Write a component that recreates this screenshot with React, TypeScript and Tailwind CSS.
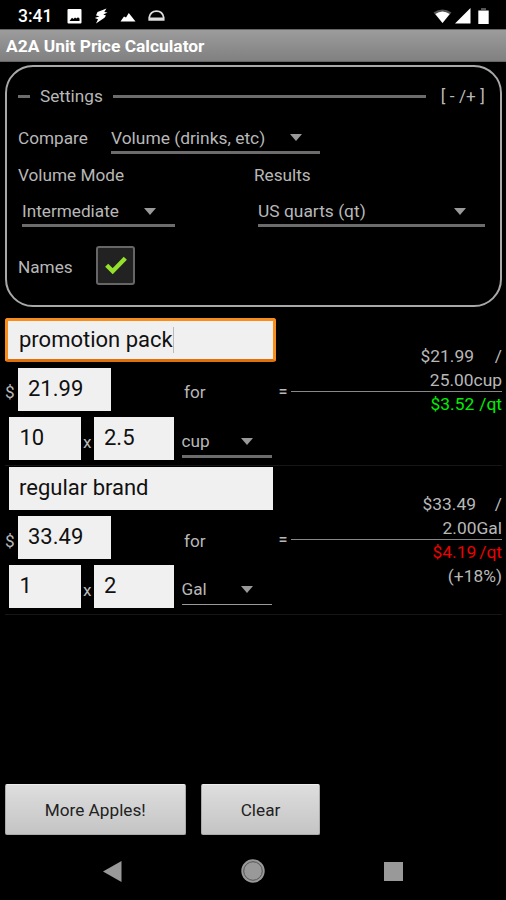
import { useState } from 'react';
import clsx from 'clsx';

type Item = {
    name: string;
    price: string;
    count: string;
    size: string;
    unit: string;
    total: string;
    result: string;
    per: string;
    diff?: string;
    best: boolean;
};

const initialItems: Item[] = [
    { name: 'promotion pack', price: '21.99', count: '10', size: '2.5', unit: 'cup', total: '25.00cup', result: '$3.52', per: '/qt', best: true },
    { name: 'regular brand', price: '33.49', count: '1', size: '2', unit: 'Gal', total: '2.00Gal', result: '$4.19', per: '/qt', diff: '(+18%)', best: false },
];

function StatusBar() {
    return (
        <div className="flex h-[29px] items-center justify-between pt-[3px] pr-[17px] pl-[18px] text-white">
            <div className="flex items-center">
                <span className="w-[49px] text-[17.5px] font-medium">3:41</span>
                <svg width="15" height="15" viewBox="0 0 15 15" fill="#fff">
                    <path fillRule="evenodd" d="M1.500 0h12a1 1 0 0 1 1 1v12.500a1 1 0 0 1-1 1H1.500a1 1 0 0 1-1-1V1a1 1 0 0 1 1-1zM2.500 12h10V9.500l-1.500-1.200L9.500 9.500 8 8.500 6.500 10 5 8.800z" />
                </svg>
                <svg className="ml-[12px]" width="14" height="16" viewBox="0 0 14 16" fill="#fff">
                    <path d="M12.500 0.500L3.500 4 2 7.500 5.500 8.300 0.800 10 4 11.200 2 15.500 10.500 9.800 12 7.500 9.300 6.500 13.500 4.500 10.300 4z" />
                </svg>
                <svg className="mt-0.5 ml-[12px]" width="16" height="10" viewBox="0 0 16 10" fill="#fff">
                    <path d="M0.500 9.500L4 4.500l2 1L8.800 1 15.500 9.500z" />
                </svg>
                <svg className="ml-[12px]" width="17" height="12" viewBox="0 0 17 12" fill="none" stroke="#ddd" strokeWidth="1.700">
                    <path d="M1.200 10V7.500C2 3.500 5 1.200 8.500 1.200s6.500 2.300 7.200 6.300V10zM1.500 8.300h14" />
                </svg>
            </div>
            <div className="flex items-center">
                <svg width="19" height="15" viewBox="0 0 19 15">
                    <path d="M0.500 3.500Q9.500-2.500 18.500 3.500L9.500 14z" fill="#555" />
                    <path d="M2.300 5Q9.500 0 16.700 5L9.500 14z" fill="#fff" />
                </svg>
                <svg className="ml-[3px]" width="16" height="16" viewBox="0 0 16 16" fill="#fff">
                    <path d="M15.500 0v15.500H0z" />
                </svg>
                <svg className="ml-[7px]" width="11" height="16" viewBox="0 0 11 16">
                    <path d="M3 0h5v2H3z" fill="#555" />
                    <path d="M0.300 2.500h10.400V16H0.300z" fill="#fff" />
                </svg>
            </div>
        </div>
    );
}

function Spinner({ label, className, thin }: { label: string; className?: string; thin?: boolean }) {
    return (
        <div className={clsx('flex items-center justify-between', thin ? 'border-b border-[#999]' : 'border-b-[3px] border-[#6c6c6c]', className)}>
            <span>{label}</span>
            <svg width="12" height="7" viewBox="0 0 12 7" fill="#999">
                <path d="M0 0h12L6 7z" />
            </svg>
        </div>
    );
}

function Field({ value, onChange, className }: { value: string; onChange: (v: string) => void; className: string }) {
    return (
        <input
            value={value}
            onChange={e => onChange(e.target.value)}
            className={clsx('h-[43px] bg-[#f0f0f0] text-[22px] text-[#111] outline-none', className)}
        />
    );
}

function Row({ item, focused, update }: { item: Item; focused: boolean; update: (patch: Partial<Item>) => void }) {
    return (
        <div className="mr-1 ml-[5px] flex h-[149px] border-b border-[#161616]">
            <div className="w-[272px] shrink-0">
                {focused ? (
                    <div className="mt-px flex h-11 w-[271px] items-center rounded-[3px] border-[3px] border-b-[#e0700a] border-[#f98d1c] bg-[#f0f0f0] pl-[11px]">
                        <span className="text-[22px] text-[#111]">{item.name}</span>
                        <span className="h-[26px] w-px bg-[#bbb]" />
                    </div>
                ) : (
                    <Field value={item.name} onChange={v => update({ name: v })} className="mt-px ml-[4px] block w-[264px] pb-0.5 pl-[10px]" />
                )}
                <div className="mt-[6px] flex h-[43px] items-center">
                    <span className={clsx('w-[13px]', focused ? 'pt-1' : 'pt-1.5')}>$</span>
                    <Field value={item.price} onChange={v => update({ price: v })} className="w-[93px] pb-[3px] pl-[10px]" />
                    <span className={clsx('ml-[73px]', focused ? 'pt-1' : 'pt-1.5')}>for</span>
                </div>
                <div className="mt-[6px] flex h-[43px] items-center pl-[3.500px]">
                    <Field value={item.count} onChange={v => update({ count: v })} className="w-[72px] pb-[3px] pl-[11px]" />
                    <span className="w-[13.500px] pt-[6px] text-center">x</span>
                    <Field value={item.size} onChange={v => update({ size: v })} className="w-[80px] pb-[3px] pl-[10px]" />
                    <Spinner label={item.unit} thin={!focused} className={clsx('ml-[7.500px] w-[90px] pr-[19px]', focused ? 'mt-[6px] h-[32px] pt-[2px]' : 'mt-[5px] h-[31px] pt-px')} />
                </div>
            </div>
            <div className={clsx('flex flex-1 text-[17.4px]', focused ? 'pt-[27px]' : 'pt-[26px]')}>
                <span className="w-[14px] pt-[38px] pl-[1.500px] text-[16px] font-medium">=</span>
                <div className="flex flex-1 flex-col text-right leading-6">
                    <div className="h-[47px]">
                        <div className="flex justify-end">
                            <span>${item.price}</span>
                            <span className={clsx('text-right', focused ? 'w-[28px]' : 'w-[26px]')}>/</span>
                        </div>
                        <div>{item.total}</div>
                    </div>
                    <div className="h-px bg-[#888]" />
                    <div className={clsx('flex justify-end', item.best ? 'gap-[5px] text-[#00ee00]' : 'gap-[3px] text-[#ee0000]')}>
                        <span>{item.result}</span>
                        <span>{item.per}</span>
                    </div>
                    {item.diff && <div>{item.diff}</div>}
                </div>
            </div>
        </div>
    );
}

export default function App() {
    const [items, setItems] = useState(initialItems);
    const [names, setNames] = useState(true);

    const update = (i: number, patch: Partial<Item>) => {
        setItems(items.map((it, n) => (n === i ? { ...it, ...patch } : it)));
    };

    const button = 'h-[51px] rounded-[2px] border border-[#aaa] border-t-[#eee] bg-linear-to-b from-[#dedede] to-[#c4c4c4] text-[#222]';

    return (
        <div className="flex h-[900px] w-[506px] flex-col overflow-hidden bg-black font-[Roboto,sans-serif] text-[17.2px] leading-5 text-[#b8b8b8]">
            <StatusBar />
            <div className="flex h-[33px] items-center border-y border-[#666] bg-linear-to-b from-[#9c9c9c] to-[#808080] pl-1.5 text-[17.4px] font-bold text-white">
                A2A Unit Price Calculator
            </div>

            <div className="mt-[3px] mr-1 ml-[5px] h-[242px] rounded-[28px] border-2 border-[#a8a8a8] pr-[15px] pl-[11px]">
                <div className="mt-[19px] flex h-5 items-center">
                    <div className="h-[3px] w-3 bg-[#6c6c6c]" />
                    <span className="ml-[10px] w-[73px]">Settings</span>
                    <div className="h-[3px] w-[313px] bg-[#6c6c6c]" />
                    <span className="ml-auto tracking-[0.1px]">[ - /+ ]</span>
                </div>
                <div className="mt-[14px] flex h-[34px] items-start">
                    <span className="w-[93px] pt-[8px]">Compare</span>
                    <Spinner label="Volume (drinks, etc)" className="h-[34px] w-[209px] pt-[4px] pr-[18px] text-[17.4px]" />
                </div>
                <div className="mt-[11px] flex h-5">
                    <span className="w-[236px]">Volume Mode</span>
                    <span>Results</span>
                </div>
                <div className="mt-[10px] flex pl-1">
                    <Spinner label="Intermediate" className="h-[32px] w-[153px] pt-[3px] pr-[19px]" />
                    <Spinner label="US quarts (qt)" className="ml-[83px] h-[32px] w-[227px] pt-[3px] pr-[19px] text-[17.4px]" />
                </div>
                <div className="mt-[19px] flex h-[39px] items-center">
                    <span className="w-[77.500px] pt-0.5">Names</span>
                    <button onClick={() => setNames(!names)} className="flex size-[39px] items-center justify-center rounded-[3px] border-2 border-[#666] bg-[#222]">
                        {names && (
                            <svg className="ml-0.5" width="22" height="19" viewBox="0 0 22 19" fill="none" stroke="#94e02c" strokeWidth="4.400">
                                <path d="M1.700 9.200l6 6L20.300 2.200" />
                            </svg>
                        )}
                    </button>
                </div>
            </div>

            <div className="mt-[10px]">
                {items.map((item, i) => (
                    <Row key={i} item={item} focused={i === 0} update={patch => update(i, patch)} />
                ))}
            </div>

            <div className="mt-auto flex gap-[15.500px] pl-[5px]">
                <button className={clsx(button, 'w-[180.500px]')}>More Apples!</button>
                <button className={clsx(button, 'w-[119px]')}>Clear</button>
            </div>
            <div className="mt-[7px] flex h-[58px] items-center pl-[103px]">
                <svg width="19" height="21" viewBox="0 0 19 21" fill="#999">
                    <path d="M18.500 0v21L0 10.500z" />
                </svg>
                <svg className="ml-[119px]" width="24" height="24" viewBox="0 0 24 24">
                    <circle cx="12" cy="12" r="11.700" fill="#999" />
                    <circle cx="12" cy="12" r="9.300" fill="none" stroke="#555" strokeWidth="1" />
                </svg>
                <div className="ml-[119px] size-[19px] bg-[#999]" />
            </div>
        </div>
    );
}
